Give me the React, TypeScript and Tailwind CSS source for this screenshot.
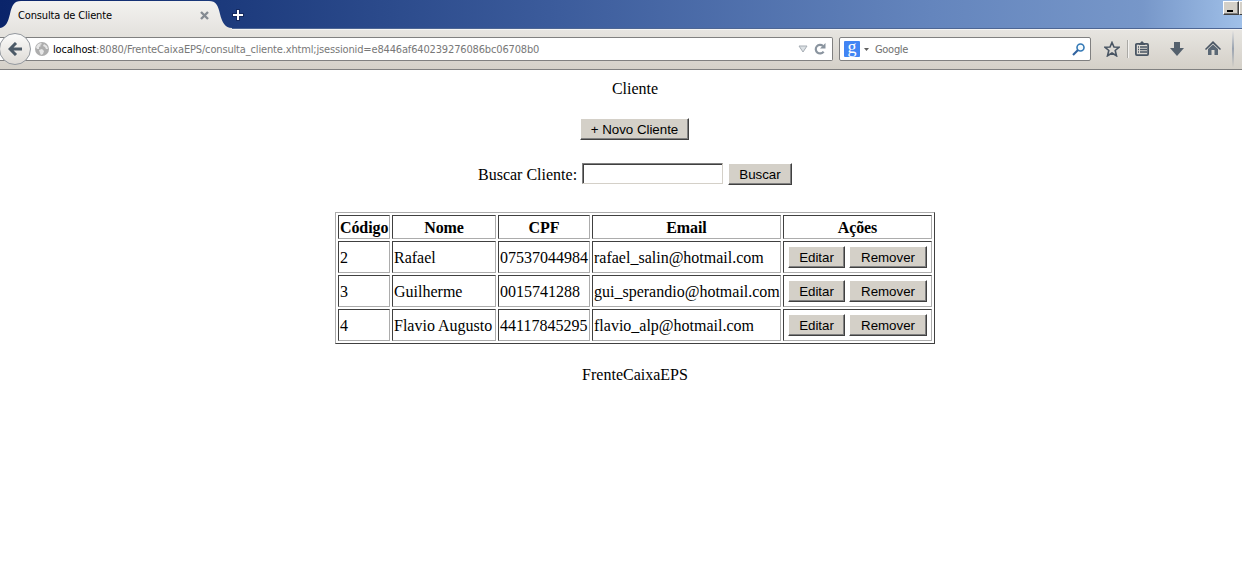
import React from "react";

const clients = [
  ["2", "Rafael", "07537044984", "rafael_salin@hotmail.com"],
  ["3", "Guilherme", "0015741288", "gui_sperandio@hotmail.com"],
  ["4", "Flavio Augusto", "44117845295", "flavio_alp@hotmail.com"],
];

function ClassicButton({ label, width }: { label: string; width: string }) {
  return (
    <button
      className={`${width} h-[22px] shrink-0 whitespace-nowrap border border-t-white border-l-white border-r-[#404040] border-b-[#404040] bg-[#d4d0c8] p-0 text-center font-['Liberation_Sans',Arial,sans-serif] text-[13.33px] leading-[19px] tracking-[-0.03px] text-black shadow-[inset_-1px_-1px_0_#808080]`}
    >
      {label}
    </button>
  );
}

function TabStrip() {
  return (
    <div className="relative z-10 flex h-7 items-start bg-[linear-gradient(90deg,#0a246a_0%,#1c3a7c_18%,#3c5c9c_45%,#6485bd_75%,#7797c9_92%,#a0c0e8_100%)]">
      <svg className="absolute left-0 top-0" width="232" height="30" viewBox="0 0 232 30">
        <defs>
          <linearGradient id="tab" x1="0" y1="0" x2="0" y2="1">
            <stop offset="0" stopColor="#f3f2f0" />
            <stop offset="1" stopColor="#e6e4e0" />
          </linearGradient>
        </defs>
        <path d="M0 28C6 27 8 22 10 14C12 5 14 1 21 1H209C216 1 218 5 220 14C222 22 225 28 232 28V30H0Z" fill="url(#tab)" />
      </svg>
      <span className="relative ml-[18px] mt-[8px] w-[182px] whitespace-nowrap font-['DejaVu_Sans_Condensed','Noto_Sans',sans-serif] text-[11px] leading-4 tracking-[-0.15px] text-black">
        Consulta de Cliente
      </span>
      <svg className="relative mt-[11px]" width="9" height="9" viewBox="0 0 9 9">
        <path d="M1 1L8 8M8 1L1 8" stroke="#858b92" strokeWidth="2.4" />
      </svg>
      <svg className="relative ml-[23px] mt-[9px]" width="12" height="12" viewBox="0 0 12 12">
        <path d="M6 0V12M0 6H12" stroke="#14295f" strokeWidth="4" />
        <path d="M6 1V11M1 6H11" stroke="#fff" strokeWidth="2" />
      </svg>
      <div className="ml-auto flex">
        <div className="mt-px flex h-[14px] w-4 items-end border border-t-white border-l-white border-r-[#404040] border-b-[#404040] bg-[#d4d0c8] pb-[2px] pl-[3px] shadow-[inset_-1px_-1px_0_#808080]">
          <i className="h-[2px] w-[6px] bg-black" />
        </div>
        <div className="mt-px h-[14px] w-[3px] border border-r-0 border-t-white border-l-white border-b-[#404040] bg-[#d4d0c8]" />
      </div>
    </div>
  );
}

function Toolbar() {
  return (
    <div className="relative flex h-[42px] items-start border-b border-[#808080] bg-[linear-gradient(180deg,#e8e6e2,#d4d0c8)] shadow-[inset_0_1px_0_#4d6694,inset_0_2px_0_#f4f3f1]">
      <div className="mt-[9px] flex h-6 w-[833px] items-center rounded-r-[2px] border border-l-0 border-[#808080] bg-white">
        <svg className="ml-[35px]" width="14" height="14" viewBox="0 0 14 14">
          <circle cx="7" cy="7" r="7" fill="#adadad" />
          <path d="M1 5L3 2L6 1L7 2L5 3L6 4L4 5L4 7L2 7ZM9 2L12 4L13 7L11 7L10 5L8 4ZM4 8L7 7L9 9L8 12L6 13L5 11Z" fill="#e6e6e6" />
        </svg>
        <span className="ml-1 mt-[2px] whitespace-nowrap font-['DejaVu_Sans_Condensed','Noto_Sans',sans-serif] text-[11px] tracking-[-0.157px] text-[#787878]">
          <span className="text-black">localhost</span>:8080/FrenteCaixaEPS/consulta_cliente.xhtml;jsessionid=e8446af640239276086bc06708b0
        </span>
        <svg className="ml-auto mr-[6px]" width="10" height="8" viewBox="0 0 10 8">
          <path d="M1 1H9L5 7Z" fill="#dce1e5" stroke="#a6adb4" />
        </svg>
        <svg className="mr-[6px]" width="12" height="12" viewBox="0 0 12 12">
          <path d="M9 3A4.3 4.3 0 1 0 9.6 8.6" fill="none" stroke="#8a949f" strokeWidth="2.2" />
          <path d="M6 5.5H11.5V0Z" fill="#8a949f" />
        </svg>
      </div>
      <div className="ml-[6px] mt-[9px] flex h-6 w-[252px] items-center rounded-[2px] border border-[#808080] bg-white">
        <span className="ml-1 flex h-4 w-4 items-center justify-center rounded-[1px] bg-[#4285f4] pb-[4px] font-['Liberation_Serif',serif] text-[18px] leading-none text-white">
          g
        </span>
        <svg className="ml-1" width="5" height="3" viewBox="0 0 5 3">
          <path d="M0 0H5L2.5 3Z" fill="#606060" />
        </svg>
        <span className="ml-[6px] mt-[2px] font-['DejaVu_Sans_Condensed','Noto_Sans',sans-serif] text-[11px] tracking-[-0.3px] text-[#707070]">Google</span>
        <svg className="ml-auto mr-[5px]" width="13" height="13" viewBox="0 0 13 13">
          <circle cx="8.5" cy="4.5" r="3.5" fill="#f4fafd" stroke="#3479b6" strokeWidth="1.6" />
          <path d="M6 7L1 12" stroke="#3163a0" strokeWidth="2.2" />
        </svg>
      </div>
      <svg className="ml-[13px] mt-[13px]" width="16" height="16" viewBox="0 0 16 16">
        <path d="M8 1.5L10 6L15 6.3L11.2 9.5L12.5 14.8L8 12L3.5 14.8L4.8 9.5L1 6.3L6 6Z" fill="none" stroke="#495563" strokeWidth="1.6" />
      </svg>
      <div className="ml-[7px] mt-3 h-[18px] w-[2px] border-l border-[#aaa9a5] bg-[#f3f2f0]" />
      <svg className="ml-[6px] mt-[13px]" width="14" height="15" viewBox="0 0 14 15">
        <path d="M4 2H5L7 0L9 2H10V4H4Z" fill="#495563" />
        <rect x=".9" y="2.9" width="12.2" height="11.2" rx="1" fill="none" stroke="#495563" strokeWidth="1.8" />
        <path d="M3 6H4M5 6H12M3 8.5H4M5 8.5H12M3 11H4M5 11H12" stroke="#495563" strokeWidth="1.3" />
      </svg>
      <svg className="ml-[21px] mt-[14px]" width="14" height="14" viewBox="0 0 14 14">
        <path d="M4 0H10V6H14L7 14L0 6H4Z" fill="#55616d" />
      </svg>
      <svg className="ml-[21px] mt-[13px]" width="16" height="15" viewBox="0 0 16 15">
        <path d="M0 8L8 0L16 8L15 9L8 2.5L1 9Z" fill="#495563" />
        <path d="M3 8L8 3.5L13 8V14H9.5V9H6.5V14H3Z" fill="#5b6875" />
      </svg>
      <div className="ml-[11px] mt-[2px] h-[37px] w-[2px] bg-[linear-gradient(#e8e6e2,#9aa3b0_50%,#d4d0c8)]" />
      <div className="absolute left-[-1px] top-[5px] flex h-8 w-8 items-center justify-center rounded-full border border-[#94999f] bg-[linear-gradient(#fbfbfa,#dedbd6)]">
        <svg width="14" height="14" viewBox="0 0 14 14">
          <path d="M8 1L2 7L8 13M2 7H14" fill="none" stroke="#4c5a67" strokeWidth="3" />
        </svg>
      </div>
    </div>
  );
}

export default function App() {
  const cell = "border border-t-[#404040] border-l-[#404040] border-r-[#acacac] border-b-[#acacac] px-px py-0";
  return (
    <div className="h-[575px] w-[1242px] overflow-hidden bg-white">
      <TabStrip />
      <Toolbar />
      <main className="flex flex-col items-center pl-7 font-['Liberation_Serif','Times_New_Roman',serif] text-[16px] leading-[19px] text-black">
        <p className="mt-[9px]">Cliente</p>
        <div className="mt-[20px] flex pr-px">
          <ClassicButton label="+ Novo Cliente" width="w-[109px]" />
        </div>
        <div className="mt-[23px] flex h-[22px] items-start">
          <label className="mr-1 mt-[2px] w-[100px] whitespace-nowrap">Buscar Cliente:</label>
          <input className="mr-[5px] h-[21px] w-[141px] border border-t-[#808080] border-l-[#808080] border-r-[#d4d0c8] border-b-[#d4d0c8] bg-white shadow-[inset_1px_1px_0_#404040] outline-none" />
          <ClassicButton label="Buscar" width="w-[64px]" />
        </div>
        <table className="mt-[27px] w-[600px] table-fixed border-separate border-spacing-[2px] border border-t-[#acacac] border-l-[#acacac] border-r-[#404040] border-b-[#404040]">
          <colgroup>
            <col className="w-[52px]" />
            <col className="w-[104px]" />
            <col className="w-[92px]" />
            <col className="w-[189px]" />
            <col className="w-[149px]" />
          </colgroup>
          <thead>
            <tr className="h-6">
              {["Código", "Nome", "CPF", "Email", "Ações"].map((h) => (
                <th key={h} className={`${cell} text-center font-bold tracking-[-0.1px]`}>{h}</th>
              ))}
            </tr>
          </thead>
          <tbody>
            {clients.map((row) => (
              <tr key={row[0]} className="h-8">
                {row.map((v) => (
                  <td key={v} className={`${cell} whitespace-nowrap text-left`}>{v}</td>
                ))}
                <td className={cell}>
                  <div className="flex justify-center gap-1">
                    <ClassicButton label="Editar" width="w-[57px]" />
                    <ClassicButton label="Remover" width="w-[78px]" />
                  </div>
                </td>
              </tr>
            ))}
          </tbody>
        </table>
        <p className="mt-[21px]">FrenteCaixaEPS</p>
      </main>
    </div>
  );
}
